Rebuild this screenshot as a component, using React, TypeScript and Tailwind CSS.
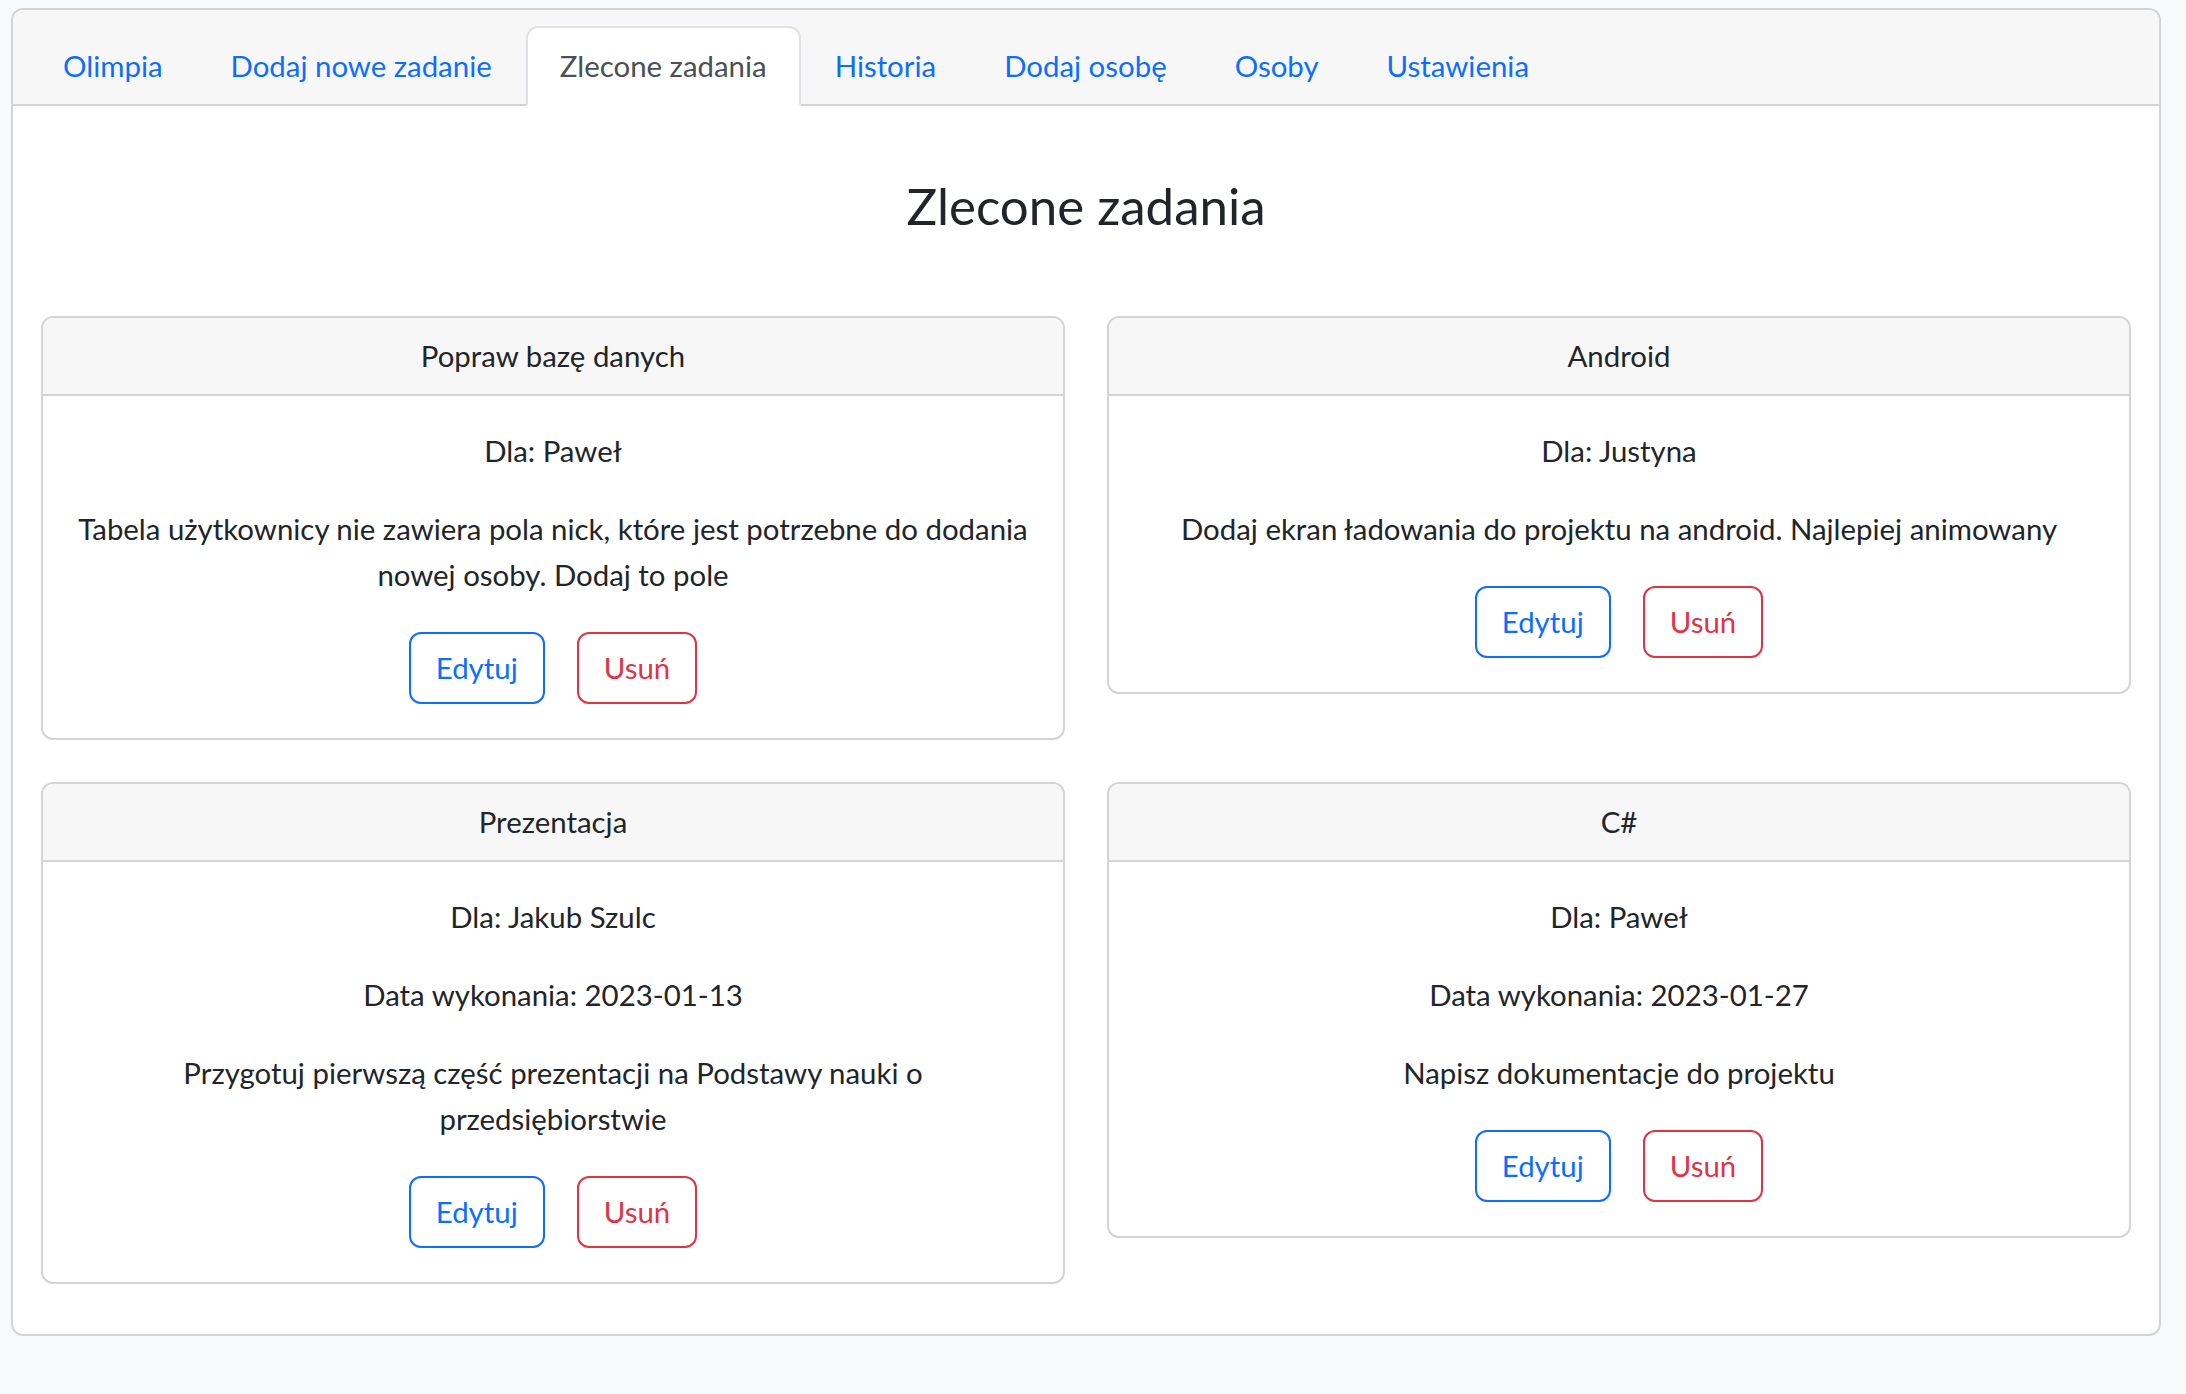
import React from "react";

type Task = {
  title: string;
  person: string;
  date?: string;
  text: string;
};

const tabs = [
  "Olimpia",
  "Dodaj nowe zadanie",
  "Zlecone zadania",
  "Historia",
  "Dodaj osobę",
  "Osoby",
  "Ustawienia",
];

const tasks: Task[] = [
  {
    title: "Popraw bazę danych",
    person: "Paweł",
    text: "Tabela użytkownicy nie zawiera pola nick, które jest potrzebne do dodania nowej osoby. Dodaj to pole",
  },
  {
    title: "Android",
    person: "Justyna",
    text: "Dodaj ekran ładowania do projektu na android. Najlepiej animowany",
  },
  {
    title: "Prezentacja",
    person: "Jakub Szulc",
    date: "2023-01-13",
    text: "Przygotuj pierwszą część prezentacji na Podstawy nauki o przedsiębiorstwie",
  },
  {
    title: "C#",
    person: "Paweł",
    date: "2023-01-27",
    text: "Napisz dokumentacje do projektu",
  },
];

function TaskCard({ task }: { task: Task }) {
  return (
    <div className="overflow-hidden rounded-[12px] border-2 border-[#d4d4d4] bg-white">
      <div className="border-b-2 border-[#d4d4d4] bg-[#f7f7f7] py-[15px] text-center">
        {task.title}
      </div>
      <div className="px-[30px] pb-[34px] pt-[32px] text-center">
        <p className="mb-[32px]">Dla: {task.person}</p>
        {task.date && <p className="mb-[32px]">Data wykonania: {task.date}</p>}
        <p className="mb-[34px]">{task.text}</p>
        <div className="flex justify-center gap-[32px]">
          <button className="rounded-[12px] border-2 border-[#0d6efd] px-[25px] py-[11px] text-[#0d6efd]">
            Edytuj
          </button>
          <button className="rounded-[12px] border-2 border-[#dc3545] px-[25px] py-[11px] text-[#dc3545]">
            Usuń
          </button>
        </div>
      </div>
    </div>
  );
}

export default function App() {
  return (
    <div
      className="min-h-screen bg-[#f8f9fa] pl-[11px] pt-[8px] text-[29.4px] leading-[46px] text-[#212529]"
      style={{ fontFamily: "Lato, 'Open Sans', sans-serif" }}
    >
      <div className="w-[2150px] overflow-hidden rounded-[12px] border-2 border-[#d4d4d4] bg-white">
        <div className="flex border-b-2 border-[#d4d4d4] bg-[#f7f7f7] px-[16px] pt-[16px]">
          {tabs.map((t) => (
            <div
              key={t}
              className={
                t === "Zlecone zadania"
                  ? "-mb-[2px] flex h-[80px] items-center rounded-t-[12px] border-2 border-[#dee2e6] border-b-white bg-white px-[32px] text-[#495057]"
                  : "-mb-[2px] flex h-[80px] items-center border-2 border-transparent px-[32px] text-[#0d6efd]"
              }
            >
              {t}
            </div>
          ))}
        </div>

        <h3 className="pt-[69px] text-center text-[51px] leading-[62px]">Zlecone zadania</h3>

        <div className="grid grid-cols-2 items-start gap-x-[42px] gap-y-[42px] px-[28px] pb-[50px] pt-[79px]">
          {tasks.map((t) => (
            <TaskCard key={t.title} task={t} />
          ))}
        </div>
      </div>
    </div>
  );
}
